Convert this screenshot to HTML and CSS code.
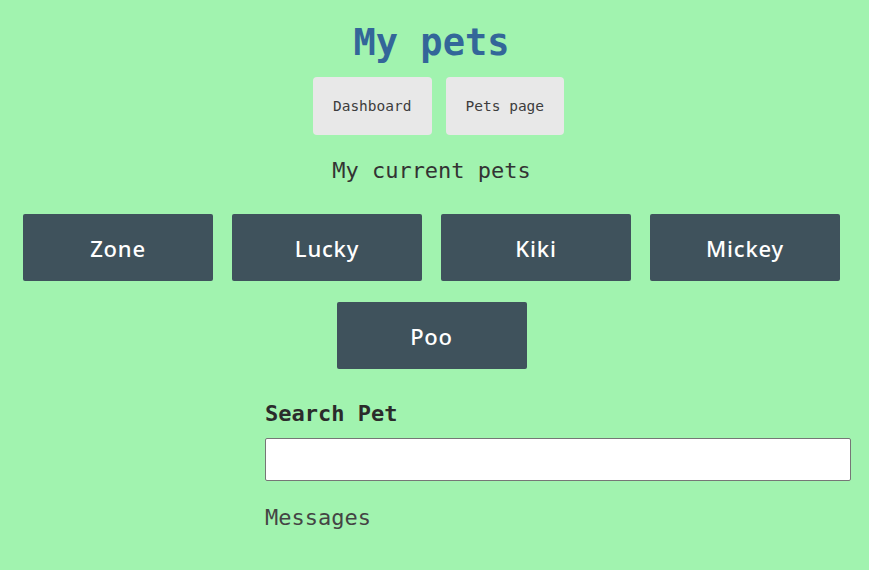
FILE: index.html
```html
<!DOCTYPE html>
<html>
<head>
<meta charset="utf-8">
<title>My pets</title>
<link rel="stylesheet" href="styles.css">
</head>
<body>
<div class="page">
  <h1 class="title">My pets</h1>
  <nav class="nav">
    <a class="nav-link" href="#">Dashboard</a>
    <a class="nav-link" href="#">Pets page</a>
  </nav>
  <h2 class="subtitle">My current pets</h2>
  <div class="pets">
    <a class="pet" href="#">Zone</a>
    <a class="pet" href="#">Lucky</a>
    <a class="pet" href="#">Kiki</a>
    <a class="pet" href="#">Mickey</a>
    <a class="pet" href="#">Poo</a>
  </div>
  <div class="search">
    <label class="search-label" for="search-box">Search Pet</label>
    <input class="search-input" id="search-box" type="text">
    <h2 class="messages">Messages</h2>
  </div>
</div>
</body>
</html>
```

FILE: styles.css
```css
html, body {
  margin: 0;
  padding: 0;
  background: #a1f3af;
}
body {
  font-family: "DejaVu Sans Mono", monospace;
  color: #333;
}
.page {
  padding: 20px 18px 0 12px;
}
.title {
  margin: 0;
  font-size: 37px;
  line-height: 46px;
  font-weight: bold;
  color: #336699;
  text-align: center;
}
.nav {
  margin-top: 11px;
  display: flex;
  justify-content: center;
  gap: 14px;
  padding-left: 14px;
}
.nav-link {
  display: block;
  padding: 20px 20px;
  font-size: 14.5px;
  line-height: 18px;
  background: #e8e8e8;
  color: #3d3d3d;
  text-decoration: none;
  border-radius: 4px;
}
.subtitle {
  margin: 22px 0 0;
  font-size: 22px;
  line-height: 28px;
  font-weight: normal;
  text-align: center;
  color: #333;
}
.pets {
  margin-top: 29px;
  display: flex;
  flex-wrap: wrap;
  justify-content: center;
  gap: 21px 19px;
}
.pet {
  width: 190px;
  height: 67px;
  display: flex;
  align-items: center;
  justify-content: center;
  background: #3f525c;
  border-radius: 2px;
  color: #fff;
  font-family: "Noto Sans", sans-serif;
  font-size: 22px;
  font-weight: 500;
  letter-spacing: 0.8px;
  text-decoration: none;
}
.search {
  margin-left: 253px;
  margin-top: 31px;
}
.search-label {
  display: block;
  font-size: 22px;
  line-height: 28px;
  font-weight: bold;
  color: #2b2b2b;
}
.search-input {
  display: block;
  box-sizing: border-box;
  width: 100%;
  height: 43px;
  margin-top: 10px;
  border: 1px solid #767676;
  border-radius: 2px;
  background: #fff;
}
.messages {
  margin: 23px 0 0;
  font-size: 22px;
  line-height: 28px;
  font-weight: normal;
  color: #444;
}
```
